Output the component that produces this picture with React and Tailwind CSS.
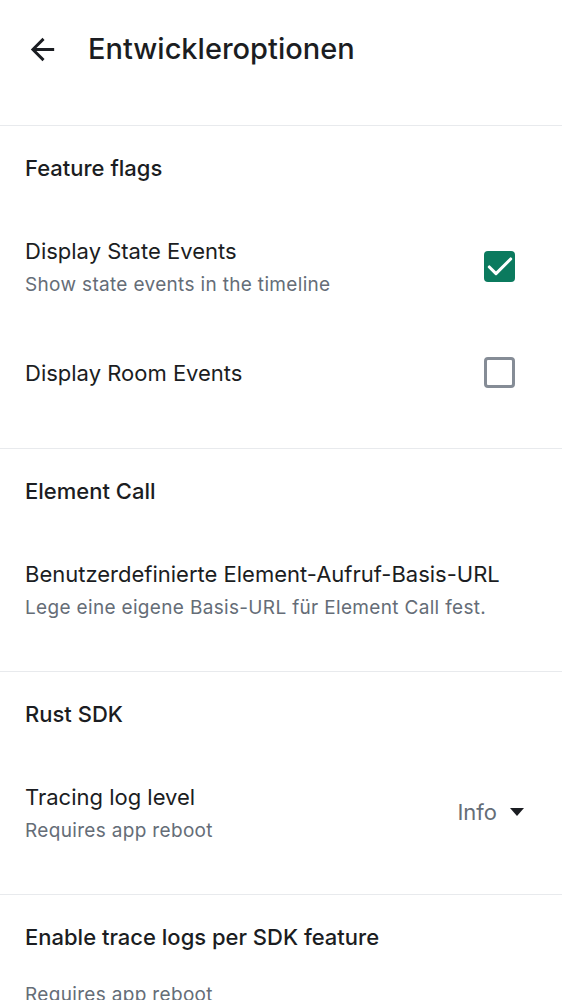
import { Check } from 'lucide-react';

const font = { fontFamily: 'Inter, "Noto Sans", sans-serif' };

function SectionHeader({ children }) {
  return (
    <div className="flex h-[84px] items-center px-[25px] text-[22px] font-medium leading-[30px] text-[#1b1d22]">
      {children}
    </div>
  );
}

function Item({ title, subtitle, right, height = 'h-[113px]' }) {
  return (
    <div className={`flex ${height} items-center justify-between px-[25px]`}>
      <div className="flex flex-col">
        <span className="text-[22px] leading-[30px] text-[#1b1d22]">{title}</span>
        {subtitle && (
          <span className="mt-[7px] text-[19px] leading-[24px] tracking-[0.33px] text-[#656d77]">{subtitle}</span>
        )}
      </div>
      {right}
    </div>
  );
}

function CheckBox({ checked }) {
  if (checked) {
    return (
      <div className="mr-[22px] flex h-[31px] w-[31px] shrink-0 items-center justify-center rounded-[4px] bg-[#0b7a5e]">
        <Check size={32} strokeWidth={2.3} className="shrink-0 text-white" />
      </div>
    );
  }
  return <div className="mr-[22px] h-[31px] w-[31px] rounded-[4px] border-[3px] border-[#858c96]" />;
}

export default function App() {
  return (
    <div className="h-[1000px] w-[562px] overflow-hidden bg-white" style={font}>
      <header className="flex h-[98px] items-center">
        <svg width="35" height="35" viewBox="0 0 24 24" className="ml-[25px]">
          <path d="M20 11H7.83l5.59-5.59L12 4l-8 8 8 8 1.41-1.41L7.83 13H20v-2z" fill="#1b1d22" />
        </svg>
        <h1 className="ml-[28px] text-[29px] font-medium text-[#1b1d22]">Entwickleroptionen</h1>
      </header>
      <div className="mt-[27px] border-t border-[#e8eaed]">
        <SectionHeader>Feature flags</SectionHeader>
        <Item
          title="Display State Events"
          subtitle="Show state events in the timeline"
          right={<CheckBox checked />}
        />
        <Item title="Display Room Events" right={<CheckBox />} height="h-[99px]" />
        <div className="h-[26px]" />
      </div>
      <div className="border-t border-[#e8eaed]">
        <SectionHeader>Element Call</SectionHeader>
        <Item
          title="Benutzerdefinierte Element-Aufruf-Basis-URL"
          subtitle="Lege eine eigene Basis-URL für Element Call fest."
        />
        <div className="h-[25px]" />
      </div>
      <div className="border-t border-[#e8eaed]">
        <SectionHeader>Rust SDK</SectionHeader>
        <Item
          title="Tracing log level"
          subtitle="Requires app reboot"
          right={
            <div className="mr-[11px] flex items-center gap-[11px] text-[22px] text-[#656d77]">
              <span>Info</span>
              <svg width="18" height="9" viewBox="0 0 18 9">
                <path d="M2 0 L16 0 L9 8 Z" fill="#1b1d22" />
              </svg>
            </div>
          }
        />
        <div className="h-[25px]" />
      </div>
      <div className="border-t border-[#e8eaed]">
        <SectionHeader>Enable trace logs per SDK feature</SectionHeader>
        <div className="mt-[4px] px-[25px] text-[19px] leading-[24px] tracking-[0.33px] text-[#656d77]">
          Requires app reboot
        </div>
      </div>
    </div>
  );
}
